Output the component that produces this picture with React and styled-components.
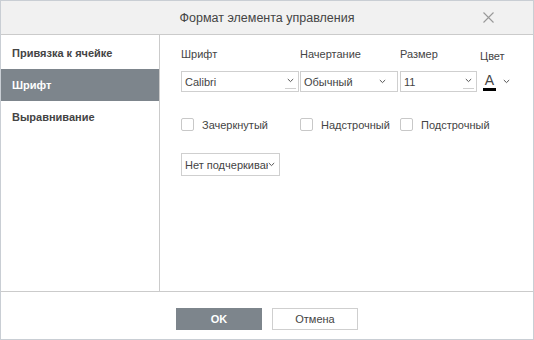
import { styled, createGlobalStyle } from "styled-components";

const Global = createGlobalStyle`
  html, body { margin: 0; padding: 0; background: #fff; }
  body { font-family: "Liberation Sans", Arial, sans-serif; font-size: 11px; color: #444; }
`;

function Chevron() {
  return (
    <svg width="7" height="5" viewBox="0 0 7 5">
      <path d="M0.8 1 L3.5 3.6 L6.2 1" fill="none" stroke="#555" strokeWidth="1" />
    </svg>
  );
}

function Select({ width, value, combo }) {
  return (
    <SelectBox $width={width}>
      <SelectValue>{value}</SelectValue>
      <ArrowBox $combo={combo}>
        <Chevron />
      </ArrowBox>
    </SelectBox>
  );
}

function Check({ label }) {
  return (
    <CheckRow>
      <CheckBox />
      <span>{label}</span>
    </CheckRow>
  );
}

export default function App() {
  return (
    <Dialog>
      <Global />
      <Header>
        Формат элемента управления
        <Close>
          <svg width="11" height="11" viewBox="0 0 11 11">
            <path d="M0.5 0.5 L10.5 10.5 M10.5 0.5 L0.5 10.5" stroke="#999" strokeWidth="1.1" />
          </svg>
        </Close>
      </Header>
      <Body>
        <Sidebar>
          <NavItem>Привязка к ячейке</NavItem>
          <NavItem $active>Шрифт</NavItem>
          <NavItem>Выравнивание</NavItem>
        </Sidebar>
        <Content>
          <FieldRow>
            <Field $width={119}>
              <Label>Шрифт</Label>
              <Select width={118} value="Calibri" combo />
            </Field>
            <Field $width={100}>
              <Label>Начертание</Label>
              <Select width={98} value="Обычный" />
            </Field>
            <Field $width={80}>
              <Label>Размер</Label>
              <Select width={77} value="11" combo />
            </Field>
            <Field $width={40}>
              <Label $low>Цвет</Label>
              <ColorPick>
                <ColorLetter>A</ColorLetter>
                <Chevron />
              </ColorPick>
            </Field>
          </FieldRow>
          <ChecksRow>
            <CheckCell $width={119}><Check label="Зачеркнутый" /></CheckCell>
            <CheckCell $width={100}><Check label="Надстрочный" /></CheckCell>
            <CheckCell $width={100}><Check label="Подстрочный" /></CheckCell>
          </ChecksRow>
          <UnderlineRow>
            <SelectBox $width={99} $height={23}>
              <SelectValue $clip>Нет подчеркивания</SelectValue>
              <SmallArrow><Chevron /></SmallArrow>
            </SelectBox>
          </UnderlineRow>
        </Content>
      </Body>
      <Footer>
        <Button $primary>OK</Button>
        <Button>Отмена</Button>
      </Footer>
    </Dialog>
  );
}

const Dialog = styled.div`
  width: 534px;
  height: 340px;
  box-sizing: border-box;
  border: 1px solid #c9ced4;
  display: flex;
  flex-direction: column;
  background: #fff;
`;

const Header = styled.div`
  height: 33px;
  flex: none;
  background: #f1f1f1;
  border-bottom: 1px solid #cbcbcb;
  display: flex;
  align-items: center;
  justify-content: center;
  font-size: 12.5px;
  color: #444;
  position: relative;
`;

const Close = styled.div`
  position: absolute;
  right: 39px;
  top: 11px;
  width: 11px;
  height: 11px;
  display: flex;
`;

const Body = styled.div`
  flex: 1;
  display: flex;
  border-bottom: 1px solid #cbcbcb;
`;

const Sidebar = styled.div`
  width: 158px;
  flex: none;
  border-right: 1px solid #cbcbcb;
  padding-top: 2px;
`;

const NavItem = styled.div`
  height: 32px;
  display: flex;
  align-items: center;
  padding-left: 11px;
  font-weight: bold;
  font-size: 11px;
  color: ${(p) => (p.$active ? "#fff" : "#444")};
  background: ${(p) => (p.$active ? "#7d858c" : "transparent")};
`;

const Content = styled.div`
  flex: 1;
  padding: 12px 0 0 21px;
`;

const FieldRow = styled.div`
  display: flex;
`;

const Field = styled.div`
  width: ${(p) => p.$width}px;
  display: flex;
  flex-direction: column;
`;

const Label = styled.div`
  height: 14px;
  line-height: 14px;
  margin-top: ${(p) => (p.$low ? "2px" : "0")};
  margin-bottom: ${(p) => (p.$low ? "8px" : "10px")};
  color: #444;
`;

const SelectBox = styled.div`
  width: ${(p) => p.$width}px;
  height: ${(p) => p.$height || 21}px;
  box-sizing: border-box;
  border: 1px solid #cfcfcf;
  display: flex;
  align-items: center;
  background: #fff;
`;

const SelectValue = styled.div`
  flex: 1;
  padding-left: 3px;
  color: #444;
  white-space: nowrap;
  overflow: hidden;
  ${(p) => p.$clip && "max-width: 86px;"}
`;

const ArrowBox = styled.div`
  width: 11px;
  height: 16px;
  align-self: flex-start;
  display: flex;
  align-items: center;
  justify-content: center;
  box-sizing: border-box;
  border-bottom: ${(p) => (p.$combo ? "1px solid #cfcfcf" : "none")};
  margin-right: ${(p) => (p.$combo ? "2px" : "9px")};
  margin-top: 1px;
`;

const SmallArrow = styled.div`
  width: 9px;
  display: flex;
  align-items: center;
  margin-right: 2px;
`;

const ColorPick = styled.div`
  height: 21px;
  display: flex;
  align-items: center;
  gap: 7px;
  padding-left: 3px;
`;

const ColorLetter = styled.div`
  font-size: 14px;
  line-height: 13px;
  width: 13px;
  text-align: center;
  color: #444;
  border-bottom: 3px solid #000;
  padding-bottom: 1px;
  margin-top: 2px;
`;

const ChecksRow = styled.div`
  display: flex;
  margin-top: 26px;
`;

const CheckCell = styled.div`
  width: ${(p) => p.$width}px;
`;

const CheckRow = styled.div`
  display: flex;
  align-items: center;
  gap: 8px;
  height: 13px;
`;

const CheckBox = styled.div`
  width: 13px;
  height: 13px;
  box-sizing: border-box;
  border: 1px solid #c8c8c8;
  border-radius: 2px;
  background: #fff;
`;

const UnderlineRow = styled.div`
  margin-top: 22px;
`;

const Footer = styled.div`
  height: 47px;
  flex: none;
  display: flex;
  align-items: center;
  justify-content: center;
  gap: 10px;
  padding-top: 6px;
  box-sizing: border-box;
`;

const Button = styled.div`
  width: 86px;
  height: 22px;
  box-sizing: border-box;
  display: flex;
  align-items: center;
  justify-content: center;
  font-size: 11px;
  font-weight: ${(p) => (p.$primary ? "bold" : "normal")};
  color: ${(p) => (p.$primary ? "#fff" : "#444")};
  background: ${(p) => (p.$primary ? "#7d858c" : "#fff")};
  border: 1px solid ${(p) => (p.$primary ? "#7d858c" : "#cfcfcf")};
`;
